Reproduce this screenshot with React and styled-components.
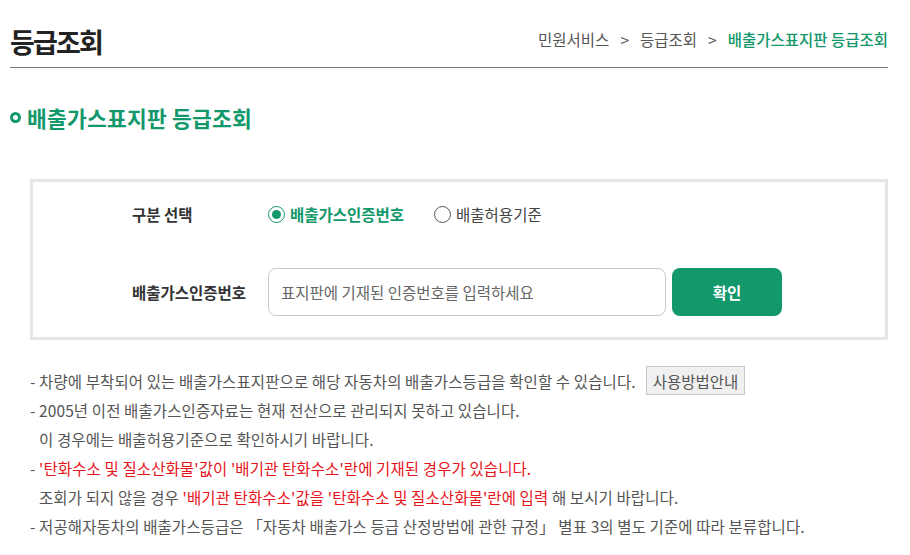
import React from "react";
import styled, { createGlobalStyle } from "styled-components";

const GREEN = "#12986b";
const RED = "#e8141b";

const GlobalStyle = createGlobalStyle`
  html, body {
    margin: 0;
    padding: 0;
    background: #fff;
  }
  body {
    font-family: "Noto Sans CJK KR", "Noto Sans", sans-serif;
    color: #333;
  }
`;

const Page = styled.div`
  width: 878px;
  padding: 0 22px 0 10px;
`;

const Header = styled.div`
  display: flex;
  align-items: center;
  justify-content: space-between;
  height: 67px;
  border-bottom: 1px solid #777;
`;

const Title = styled.h1`
  margin: 0;
  font-size: 27px;
  font-weight: 700;
  letter-spacing: -1.8px;
  color: #222;
  padding-top: 16px;
`;

const Breadcrumb = styled.div`
  display: flex;
  align-items: center;
  gap: 11px;
  font-size: 15.5px;
  color: #555;
  padding-top: 10px;
`;

const Crumb = styled.span`
  color: ${(p) => (p.$active ? GREEN : "#555")};
  font-weight: ${(p) => (p.$active ? 500 : 400)};
`;

const Sep = styled.span`
  color: #555;
`;

const SectionTitle = styled.h2`
  display: flex;
  align-items: center;
  gap: 6px;
  margin: 34px 0 0;
  font-size: 21.5px;
  font-weight: 700;
  letter-spacing: 0.2px;
  color: ${GREEN};
`;

const Ring = styled.span`
  width: 5px;
  height: 5px;
  border: 3.5px solid ${GREEN};
  border-radius: 50%;
`;

const Box = styled.div`
  margin: 46px 0 0 20px;
  border: 3px solid #e5e5e5;
  padding: 15px 0 21px 99px;
  display: flex;
  flex-direction: column;
  gap: 37px;
`;

const Row = styled.div`
  display: flex;
  align-items: center;
  min-height: ${(p) => p.$h || 30}px;
`;

const Label = styled.div`
  width: 136px;
  font-size: 15.5px;
  font-weight: 700;
  color: #333;
`;

const RadioGroup = styled.div`
  display: flex;
  align-items: center;
  gap: 30px;
`;

const RadioItem = styled.label`
  display: flex;
  align-items: center;
  gap: 5px;
  font-size: 15.5px;
  font-weight: ${(p) => (p.$checked ? 700 : 400)};
  color: ${(p) => (p.$checked ? GREEN : "#444")};
`;

const RadioDot = styled.span`
  box-sizing: border-box;
  width: 17px;
  height: 17px;
  border-radius: 50%;
  border: 1.5px solid ${(p) => (p.$checked ? GREEN : "#555")};
  display: flex;
  align-items: center;
  justify-content: center;
  &::after {
    content: "";
    width: 9px;
    height: 9px;
    border-radius: 50%;
    background: ${GREEN};
    display: ${(p) => (p.$checked ? "block" : "none")};
  }
`;

const Input = styled.input`
  box-sizing: border-box;
  width: 398px;
  height: 48px;
  border: 1px solid #c8c8c8;
  border-radius: 8px;
  padding: 0 12px;
  font-family: inherit;
  font-size: 15.5px;
  outline: none;
  &::placeholder {
    color: #666;
  }
`;

const SubmitButton = styled.button`
  width: 110px;
  height: 48px;
  margin-left: 6px;
  border: none;
  border-radius: 8px;
  background: ${GREEN};
  color: #fff;
  font-family: inherit;
  font-size: 15.5px;
  font-weight: 700;
`;

const Notes = styled.ul`
  list-style: none;
  margin: 26px 0 0 20px;
  padding: 0;
  font-size: 15.5px;
  letter-spacing: 0.1px;
  color: #555;
`;

const Note = styled.li`
  display: flex;
  align-items: center;
  min-height: 29px;
  white-space: pre;
  color: #555;
  padding-left: ${(p) => (p.$indent ? "9px" : "0")};
`;

const Red = styled.span`
  color: ${RED};
`;

const GuideButton = styled.button`
  margin-left: 10px;
  height: 29px;
  padding: 0 6px;
  border: 1px solid #c8c8c8;
  background: #f0f0f0;
  color: #555;
  font-family: inherit;
  font-size: 15.5px;
`;

export default function App() {
  return (
    <Page>
      <GlobalStyle />
      <Header>
        <Title>등급조회</Title>
        <Breadcrumb>
          <Crumb>민원서비스</Crumb>
          <Sep>&gt;</Sep>
          <Crumb>등급조회</Crumb>
          <Sep>&gt;</Sep>
          <Crumb $active>배출가스표지판 등급조회</Crumb>
        </Breadcrumb>
      </Header>

      <SectionTitle>
        <Ring />
        배출가스표지판 등급조회
      </SectionTitle>

      <Box>
        <Row $h={34}>
          <Label>구분 선택</Label>
          <RadioGroup>
            <RadioItem $checked>
              <RadioDot $checked />
              배출가스인증번호
            </RadioItem>
            <RadioItem>
              <RadioDot />
              배출허용기준
            </RadioItem>
          </RadioGroup>
        </Row>
        <Row $h={48}>
          <Label>배출가스인증번호</Label>
          <Input placeholder="표지판에 기재된 인증번호를 입력하세요" />
          <SubmitButton>확인</SubmitButton>
        </Row>
      </Box>

      <Notes>
        <Note>
          - 차량에 부착되어 있는 배출가스표지판으로 해당 자동차의 배출가스등급을 확인할 수 있습니다.
          <GuideButton>사용방법안내</GuideButton>
        </Note>
        <Note>- 2005년 이전 배출가스인증자료는 현재 전산으로 관리되지 못하고 있습니다.</Note>
        <Note $indent>이 경우에는 배출허용기준으로 확인하시기 바랍니다.</Note>
        <Note>
          - <Red>'탄화수소 및 질소산화물'값이 '배기관 탄화수소'란에 기재된 경우가 있습니다.</Red>
        </Note>
        <Note $indent>
          조회가 되지 않을 경우 <Red>'배기관 탄화수소'값을 '탄화수소 및 질소산화물'란에 입력</Red> 해 보시기 바랍니다.
        </Note>
        <Note>- 저공해자동차의 배출가스등급은 「자동차 배출가스 등급 산정방법에 관한 규정」 별표 3의 별도 기준에 따라 분류합니다.</Note>
      </Notes>
    </Page>
  );
}
